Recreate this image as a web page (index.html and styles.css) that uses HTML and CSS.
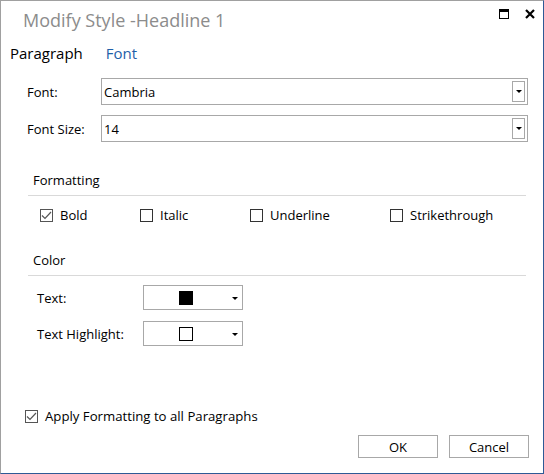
FILE: index.html
```html
<!DOCTYPE html>
<html>
<head>
<meta charset="utf-8">
<link rel="stylesheet" href="styles.css">
</head>
<body>
<div class="dialog">
  <div class="titlebar">
    <div class="title">Modify Style -Headline 1</div>
    <div class="controls">
      <span class="maxi"></span>
      <svg class="close" width="10" height="10" viewBox="0 0 10 10"><path d="M1 1 L9 9 M9 1 L1 9" stroke="#000" stroke-width="2.2"/></svg>
    </div>
  </div>
  <div class="tabs">
    <span class="tab">Paragraph</span>
    <span class="tab active">Font</span>
  </div>
  <div class="fields">
    <div class="row">
      <label class="lbl">Font:</label>
      <div class="select"><span class="val">Cambria</span><span class="btn"><i class="arrow"></i></span></div>
    </div>
    <div class="row">
      <label class="lbl">Font Size:</label>
      <div class="select"><span class="val">14</span><span class="btn"><i class="arrow"></i></span></div>
    </div>
  </div>
  <div class="section">
    <div class="sec-head">Formatting</div>
    <div class="checks">
      <div class="check w-bold"><span class="box checked"><svg width="11" height="9" viewBox="0 0 11 9"><path d="M1 4.5 L4 7.5 L10 1" stroke="#555" stroke-width="1.2" fill="none"/></svg></span>Bold</div>
      <div class="check w-italic"><span class="box"></span>Italic</div>
      <div class="check w-under"><span class="box"></span>Underline</div>
      <div class="check"><span class="box"></span>Strikethrough</div>
    </div>
  </div>
  <div class="section color">
    <div class="sec-head">Color</div>
    <div class="crow">
      <span class="clbl">Text:</span>
      <div class="cpick"><span class="swatch black"></span><i class="arrow"></i></div>
    </div>
    <div class="crow">
      <span class="clbl">Text Highlight:</span>
      <div class="cpick"><span class="swatch white"></span><i class="arrow"></i></div>
    </div>
  </div>
  <div class="spacer"></div>
  <div class="apply"><span class="box checked"><svg width="11" height="9" viewBox="0 0 11 9"><path d="M1 4.5 L4 7.5 L10 1" stroke="#555" stroke-width="1.2" fill="none"/></svg></span>Apply Formatting to all Paragraphs</div>
  <div class="buttons">
    <button class="pbtn">OK</button>
    <button class="pbtn">Cancel</button>
  </div>
</div>
</body>
</html>
```
FILE: styles.css
```css
* { box-sizing: border-box; }
html, body { margin: 0; padding: 0; background: #fff; }
body { font-family: "Open Sans", "Noto Sans", sans-serif; color: #000; }
.dialog {
  width: 544px; height: 474px;
  border-left: 1px solid #a0a0a0;
  border-top: 1px solid #a0a0a0;
  border-right: 1px solid #2e5a96;
  border-bottom: 1px solid #2e5a96;
  display: flex; flex-direction: column;
  background: #fff;
}
.titlebar { height: 42px; display: flex; align-items: flex-start; justify-content: space-between; }
.title { font-size: 18px; color: #8c8c8c; margin: 7px 0 0 22px; }
.controls { display: flex; align-items: center; gap: 16px; margin: 8px 8px 0 0; height: 10px; }
.maxi { width: 10px; height: 10px; border: 1px solid #000; border-top-width: 3px; display: block; }
.close { display: block; }
.tabs { display: flex; gap: 23px; padding-left: 9px; font-size: 15px; height: 35px; }
.tab { line-height: 20px; }
.tab.active { color: #1f5fa9; }
.fields { display: flex; flex-direction: column; gap: 10px; padding-left: 26px; padding-right: 15px; }
.row { display: flex; align-items: center; height: 27px; }
.lbl { width: 74px; font-size: 13px; }
.select { flex: 1; height: 27px; border: 1px solid #a8a8a8; display: flex; align-items: center; justify-content: space-between; padding-left: 2px; padding-right: 2px; }
.val { font-size: 13px; }
.btn { width: 13px; height: 21px; border: 1px solid #a8a8a8; display: flex; align-items: center; justify-content: center; }
.arrow { display: block; width: 0; height: 0; border-left: 3px solid transparent; border-right: 3px solid transparent; border-top: 3px solid #000; }
.section { margin-left: 27px; margin-right: 17px; margin-top: 29px; }
.sec-head { font-size: 13px; line-height: 18px; padding: 0 0 6px 5px; border-bottom: 1px solid #d9d9d9; }
.checks { display: flex; font-size: 13px; padding-left: 12px; margin-top: 11px; }
.check { display: flex; align-items: center; line-height: 16px; }
.w-bold { width: 100px; }
.w-italic { width: 110px; }
.w-under { width: 140px; }
.box { width: 13px; height: 13px; border: 1px solid #333; margin-right: 7px; display: flex; align-items: center; justify-content: center; }
.box.checked { border-color: #555; }
.color { margin-top: 28px; }
.crow { display: flex; align-items: center; margin-top: 9px; font-size: 13px; }
.crow + .crow { margin-top: 11px; }
.clbl { width: 115px; padding-left: 9px; }
.cpick { width: 100px; height: 25px; border: 1px solid #a8a8a8; display: flex; align-items: center; }
.swatch { width: 14px; height: 14px; margin-left: 35px; display: block; }
.swatch.black { background: #000; }
.swatch.white { background: #fff; border: 1px solid #000; }
.cpick .arrow { margin-left: auto; margin-right: 4px; margin-top: 2px; }
.spacer { flex: 1; }
.apply { display: flex; align-items: center; font-size: 13.2px; padding-left: 24px; margin-bottom: 10px; }
.buttons { display: flex; justify-content: flex-end; gap: 11px; padding-right: 14px; margin-bottom: 15px; }
.pbtn { width: 80px; height: 23px; border: 1px solid #a8a8a8; background: #fff; font-family: inherit; font-size: 13px; padding: 0; color: #000; }
```
